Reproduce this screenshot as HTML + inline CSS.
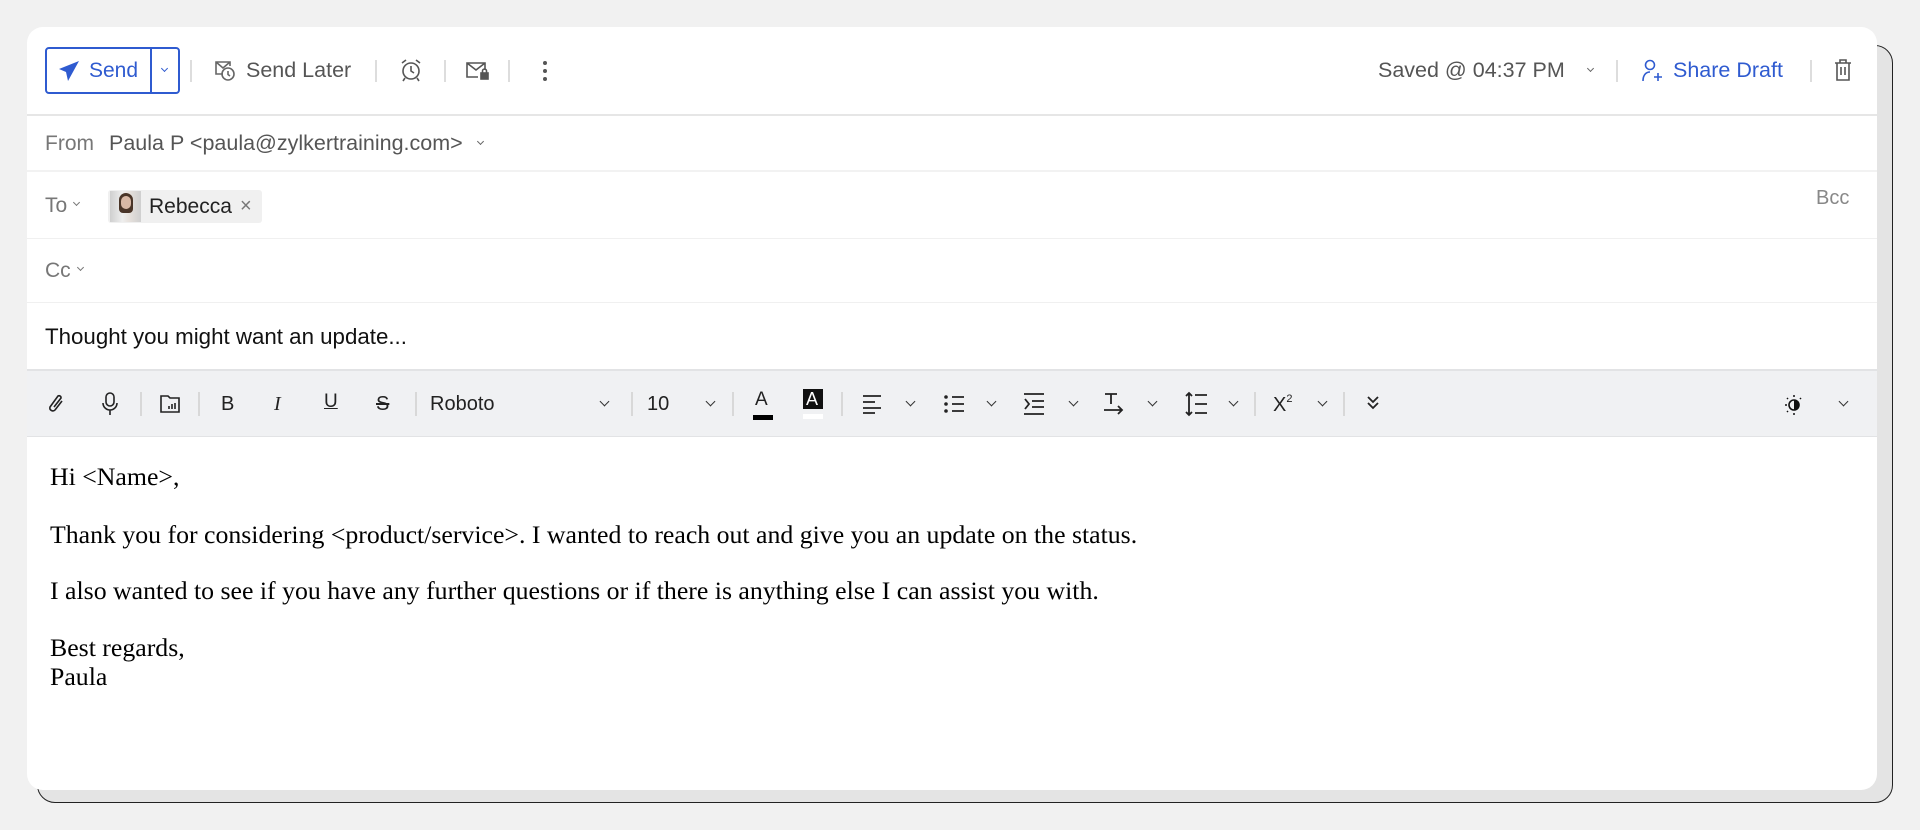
<!DOCTYPE html>
<html><head><meta charset="utf-8"><style>
*{margin:0;padding:0;box-sizing:border-box}
body{width:1920px;height:830px;background:#f1f1f1;position:relative;overflow:hidden;font-family:"Liberation Sans",sans-serif}
.a{position:absolute}
.back{left:37px;top:45px;width:1856px;height:758px;border:1.5px solid #222;border-radius:18px;background:#e4e4e4}
.card{left:27px;top:27px;width:1850px;height:763px;background:#fff;border-radius:16px;overflow:hidden}
.t{position:absolute;white-space:nowrap;line-height:1}
.sep{position:absolute;width:1.5px;height:22px;background:#ddd}
svg{position:absolute;overflow:visible}
.chev{position:absolute;width:7px;height:7px;border-right:1.8px solid #333;border-bottom:1.8px solid #333;transform:rotate(45deg)}
.tsep{position:absolute;width:1.5px;height:24px;background:#d8d8d8;top:392px}
.body{font-family:"Liberation Serif",serif;font-size:25.8px;color:#000}
</style></head><body>
<div class="a back"></div>
<div class="a card"></div>
<div class="a" style="left:45px;top:47px;width:135px;height:47px;border:2px solid #2f5bd0;border-radius:4px"></div>
<div class="a" style="left:150px;top:47px;width:2px;height:47px;background:#2f5bd0"></div>
<svg style="left:58px;top:60px" width="22" height="22" viewBox="0 0 22 22"><path d="M21 1 L1 9 L8 12 L10 21 Z" fill="#2f5bd0"/></svg>
<div class="t" style="left:89px;top:60px;font-size:21px;color:#2f5bd0">Send</div>
<div class="chev" style="left:162px;top:66px;width:5px;height:5px;border-color:#2f5bd0;border-width:1.3px"></div>
<div class="sep" style="left:190px;top:60px"></div>
<svg style="left:214px;top:58px" width="22" height="24" viewBox="0 0 22 24" fill="none" stroke="#666" stroke-width="1.6"><path d="M9 16H2V4h14v4M2 4l7 6 7-6"/><circle cx="14" cy="16" r="6"/><path d="M14 13v3.5l2 1.5"/></svg>
<div class="t" style="left:246px;top:60px;font-size:21.5px;color:#555">Send Later</div>
<div class="sep" style="left:375px;top:60px"></div>
<svg style="left:400px;top:58px" width="22" height="24" viewBox="0 0 22 24" fill="none" stroke="#555" stroke-width="1.6"><circle cx="11" cy="13" r="8"/><path d="M11 8v5l3 2M2 5l4-3M20 5l-4-3M5 20l-2 3M17 20l2 3"/></svg>
<div class="sep" style="left:444px;top:60px"></div>
<svg style="left:465px;top:61px" width="24" height="20" viewBox="0 0 24 20" fill="none" stroke="#555" stroke-width="1.6"><path d="M13 16H2V2h18v7M2 2l9 7 9-7"/><rect x="16" y="12" width="7" height="6" fill="#555"/><path d="M17.5 12v-2a2 2 0 0 1 4 0v2"/></svg>
<div class="sep" style="left:508px;top:60px"></div>
<svg style="left:542px;top:60px" width="6" height="22"><circle cx="3" cy="3" r="2" fill="#555"/><circle cx="3" cy="11" r="2" fill="#555"/><circle cx="3" cy="19" r="2" fill="#555"/></svg>
<div class="t" style="left:1378px;top:60px;font-size:21.5px;color:#555">Saved @ 04:37 PM</div>
<div class="chev" style="left:1588px;top:66px;width:5px;height:5px;border-color:#666;border-width:1.3px"></div>
<div class="sep" style="left:1616px;top:60px"></div>
<svg style="left:1641px;top:59px" width="24" height="24" viewBox="0 0 24 24" fill="none" stroke="#2f5bd0" stroke-width="1.6"><circle cx="9" cy="6" r="4.5"/><path d="M2 22c0-6 3-9 7-9"/><path d="M17 14v8M13 18h8"/></svg>
<div class="t" style="left:1673px;top:60px;font-size:21.5px;color:#2f5bd0">Share Draft</div>
<div class="sep" style="left:1810px;top:60px"></div>
<svg style="left:1834px;top:58px" width="18" height="24" viewBox="0 0 18 24" fill="none" stroke="#555" stroke-width="1.6"><path d="M1 5h16M6 5V2h6v3M3 5v17h12V5M7 9v8M11 9v8"/></svg>
<div class="a" style="left:27px;top:114px;width:1850px;height:2px;background:#e6e6e6"></div>
<div class="t" style="left:45px;top:133px;font-size:21px;color:#777">From</div>
<div class="t" style="left:109px;top:133px;font-size:21.5px;color:#555">Paula P &lt;paula@zylkertraining.com&gt;</div>
<div class="chev" style="left:478px;top:139px;width:5px;height:5px;border-color:#666;border-width:1.3px"></div>
<div class="a" style="left:27px;top:170px;width:1850px;height:2px;background:#f2f2f2"></div>
<div class="t" style="left:45px;top:195px;font-size:21px;color:#777">To</div>
<div class="chev" style="left:74px;top:200px;width:5px;height:5px;border-color:#777;border-width:1.3px"></div>
<div class="a" style="left:108px;top:190px;width:154px;height:33px;background:#f0f0f0;border-radius:3px"></div>
<div class="a" style="left:110px;top:191px;width:31px;height:31px;background:linear-gradient(90deg,#cfcfcf,#eee 40%,#e8e2dd 60%,#cfcfcf)"></div>
<div class="a" style="left:119px;top:193px;width:14px;height:20px;background:#4a3528;border-radius:7px 7px 4px 4px"></div>
<div class="a" style="left:121px;top:196px;width:10px;height:13px;background:#d8b8a5;border-radius:5px"></div>
<div class="t" style="left:149px;top:196px;font-size:21px;color:#222">Rebecca</div>
<div class="t" style="left:240px;top:196px;font-size:20px;color:#777">×</div>
<div class="t" style="left:1816px;top:188px;font-size:20px;color:#888">Bcc</div>
<div class="a" style="left:27px;top:238px;width:1850px;height:1px;background:#f0f0f0"></div>
<div class="t" style="left:45px;top:260px;font-size:21px;color:#777">Cc</div>
<div class="chev" style="left:78px;top:265px;width:5px;height:5px;border-color:#777;border-width:1.3px"></div>
<div class="a" style="left:27px;top:302px;width:1850px;height:1px;background:#f0f0f0"></div>
<div class="t" style="left:45px;top:326px;font-size:22.3px;color:#111">Thought you might want an update...</div>
<div class="a" style="left:27px;top:369px;width:1850px;height:68px;background:#f0f1f3;border-top:2px solid #e2e3e5;border-bottom:1px solid #e2e3e5"></div>
<svg style="left:48px;top:393px" width="18" height="22" viewBox="0 0 18 22" fill="none" stroke="#222" stroke-width="1.6"><path d="M14 8l-7 9a3 3 0 0 1-5-3l8-11a2 2 0 0 1 3 2l-7 9"/></svg>
<svg style="left:102px;top:392px" width="16" height="24" viewBox="0 0 16 24" fill="none" stroke="#222" stroke-width="1.6"><rect x="4" y="1" width="8" height="13" rx="4"/><path d="M1 11a7 7 0 0 0 14 0M8 18v5"/></svg>
<div class="tsep" style="left:140px"></div>
<svg style="left:160px;top:395px" width="20" height="18" viewBox="0 0 20 18" fill="none" stroke="#222" stroke-width="1.6"><path d="M1 1h7l2 2h9v14H1z"/><path d="M9 14v-3M12 14v-5M15 14v-6"/></svg>
<div class="tsep" style="left:198px"></div>
<div class="t" style="left:221px;top:394px;font-size:20px;color:#222">B</div>
<div class="t" style="left:274px;top:394px;font-size:20px;color:#222;font-style:italic;font-family:'Liberation Serif',serif">I</div>
<div class="t" style="left:324px;top:392px;font-size:19px;color:#222;text-decoration:underline">U</div>
<div class="t" style="left:376px;top:394px;font-size:20px;color:#222;text-decoration:line-through">S</div>
<div class="tsep" style="left:415px"></div>
<div class="t" style="left:430px;top:394px;font-size:20px;color:#222">Roboto</div>
<div class="chev" style="left:601px;top:398px"></div>
<div class="tsep" style="left:631px"></div>
<div class="t" style="left:647px;top:394px;font-size:20px;color:#222">10</div>
<div class="chev" style="left:707px;top:398px"></div>
<div class="tsep" style="left:732px"></div>
<div class="t" style="left:755px;top:390px;font-size:19px;color:#222">A</div>
<div class="a" style="left:753px;top:415px;width:20px;height:5px;background:#000"></div>
<div class="a" style="left:803px;top:389px;width:20px;height:20px;background:#111"></div>
<div class="t" style="left:806px;top:390px;font-size:18px;color:#fff">A</div>
<div class="a" style="left:803px;top:414px;width:20px;height:5px;background:#fff"></div>
<div class="tsep" style="left:841px"></div>
<svg style="left:863px;top:394px" width="18" height="20" stroke="#222" stroke-width="1.8"><path d="M0 2h18M0 8h12M0 14h18M0 19h12"/></svg>
<div class="chev" style="left:907px;top:398px"></div>
<svg style="left:944px;top:394px" width="20" height="20" stroke="#222" stroke-width="1.8"><path d="M8 3h12M8 10h12M8 17h12"/><circle cx="2" cy="3" r="1.8" fill="#222" stroke="none"/><circle cx="2" cy="10" r="1.8" fill="#222" stroke="none"/><circle cx="2" cy="17" r="1.8" fill="#222" stroke="none"/></svg>
<div class="chev" style="left:988px;top:398px"></div>
<svg style="left:1024px;top:393px" width="20" height="22" fill="none" stroke="#222" stroke-width="1.8"><path d="M0 1h20M0 21h20M8 8h12M8 14h12M1 6l4 5-4 5"/></svg>
<div class="chev" style="left:1070px;top:398px"></div>
<svg style="left:1104px;top:392px" width="20" height="24" fill="none" stroke="#222" stroke-width="1.8"><path d="M1 2h12M7 2v10M0 18h18M14 14l4 4-4 4"/></svg>
<div class="chev" style="left:1149px;top:398px"></div>
<svg style="left:1185px;top:392px" width="22" height="24" fill="none" stroke="#222" stroke-width="1.8"><path d="M4 1v22M1 4l3-3 3 3M1 20l3 3 3-3M10 3h12M10 12h12M10 21h12"/></svg>
<div class="chev" style="left:1230px;top:398px"></div>
<div class="tsep" style="left:1254px"></div>
<div class="t" style="left:1273px;top:394px;font-size:20px;color:#222">X<span style="font-size:11px;vertical-align:9px">2</span></div>
<div class="chev" style="left:1319px;top:398px"></div>
<div class="tsep" style="left:1343px"></div>
<svg style="left:1367px;top:396px" width="12" height="14" fill="none" stroke="#222" stroke-width="1.8"><path d="M1 1l5 5 5-5M1 7l5 5 5-5"/></svg>
<svg style="left:1782px;top:394px" width="22" height="22"><circle cx="12" cy="11" r="5" fill="none" stroke="#111" stroke-width="1.6"/><path d="M12 6a5 5 0 0 1 0 10z" fill="#111"/><path d="M12 1v2M12 19v2M3 11h2M5 4l1 1M5 18l1-1M19 4l-1 1" stroke="#111" stroke-width="1.5"/></svg>
<div class="chev" style="left:1840px;top:398px"></div>
<div class="t body" style="left:50px;top:464px">Hi &lt;Name&gt;,</div>
<div class="t body" style="left:50px;top:522px">Thank you for considering &lt;product/service&gt;. I wanted to reach out and give you an update on the status.</div>
<div class="t body" style="left:50px;top:578px">I also wanted to see if you have any further questions or if there is anything else I can assist you with.</div>
<div class="t body" style="left:50px;top:635px">Best regards,</div>
<div class="t body" style="left:50px;top:664px">Paula</div>
</body></html>
